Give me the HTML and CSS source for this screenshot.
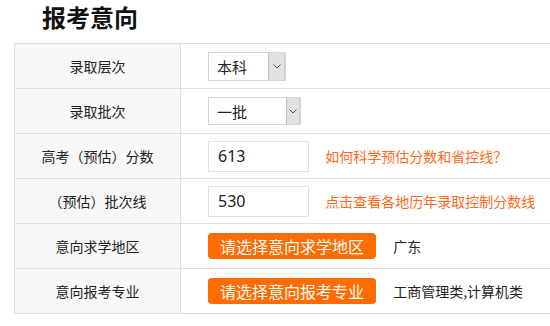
FILE: index.html
```html
<!DOCTYPE html>
<html lang="zh-CN">
<head>
    <meta charset="UTF-8">
    <title>报考意向</title>
    <link rel="stylesheet" href="styles.css">
</head>
<body>
    <h2 class="title">报考意向</h2>
    <table class="form">
        <tr>
            <td class="label">录取层次</td>
            <td class="field">
                <span class="select select-level">
                    <span class="select-value">本科</span>
                    <span class="select-arrow"><svg width="8" height="5" viewBox="0 0 8 5"><path d="M0.5 0.5 L4 4 L7.5 0.5" fill="none" stroke="#555" stroke-width="1"/></svg></span>
                </span>
            </td>
        </tr>
        <tr>
            <td class="label">录取批次</td>
            <td class="field">
                <span class="select select-batch">
                    <span class="select-value">一批</span>
                    <span class="select-arrow"><svg width="8" height="5" viewBox="0 0 8 5"><path d="M0.5 0.5 L4 4 L7.5 0.5" fill="none" stroke="#555" stroke-width="1"/></svg></span>
                </span>
            </td>
        </tr>
        <tr>
            <td class="label">高考（预估）分数</td>
            <td class="field">
                <input class="score" type="text" value="613">
                <a class="tip" href="#">如何科学预估分数和省控线？</a>
            </td>
        </tr>
        <tr>
            <td class="label">（预估）批次线</td>
            <td class="field">
                <input class="score" type="text" value="530">
                <a class="tip" href="#">点击查看各地历年录取控制分数线</a>
            </td>
        </tr>
        <tr>
            <td class="label">意向求学地区</td>
            <td class="field">
                <a class="btn" href="#">请选择意向求学地区</a>
                <span class="chosen">广东</span>
            </td>
        </tr>
        <tr>
            <td class="label">意向报考专业</td>
            <td class="field">
                <a class="btn" href="#">请选择意向报考专业</a>
                <span class="chosen">工商管理类,计算机类</span>
            </td>
        </tr>
    </table>
</body>
</html>
```

FILE: styles.css
```css
html, body {
    margin: 0;
    padding: 0;
    overflow: hidden;
    background: #fff;
    font-family: "Noto Sans CJK SC", "Noto Sans", sans-serif;
    color: #333;
}
.title {
    margin: 0;
    padding-left: 42px;
    font-size: 24px;
    line-height: 34px;
    font-weight: bold;
    color: #111;
}
.form {
    margin: 9px 0 0 14px;
    width: 580px;
    border-collapse: collapse;
}
.form td {
    height: 44px;
    border: 1px solid #dedede;
    padding: 0;
    font-size: 14px;
    vertical-align: middle;
}
.label {
    width: 165px;
    background-color: #f7f7f7;
    text-align: center;
    color: #222;
}
.field {
    padding-left: 27px !important;
    white-space: nowrap;
}
.select {
    display: inline-flex;
    box-sizing: border-box;
    height: 29px;
    border: 1px solid #d5d5d5;
    vertical-align: middle;
    background: #fff;
}
.select-level {
    width: 78px;
}
.select-batch {
    width: 93px;
    height: 28px;
}
.select-value {
    flex: 1;
    padding-left: 8px;
    font-size: 15px;
    line-height: 27px;
    color: #222;
}
.select-arrow {
    width: 15px;
    display: flex;
    align-items: center;
    justify-content: center;
    background: #e1e1e1;
    border-left: 1px solid #bdbdbd;
    border-right: 1px solid #cfcfcf;
}
.select-batch .select-arrow {
    width: 12px;
}
.score {
    box-sizing: border-box;
    width: 101px;
    height: 31px;
    border: 1px solid #dde2e8;
    padding: 0 0 0 9px;
    font-family: "Noto Sans", sans-serif;
    font-size: 16px;
    color: #222;
    vertical-align: middle;
    outline: none;
}
.tip {
    margin-left: 13px;
    color: #ff6a1a;
    text-decoration: none;
    vertical-align: middle;
}
.btn {
    display: inline-block;
    width: 168px;
    height: 26px;
    line-height: 26px;
    border-radius: 4px;
    background-color: #ff6c00;
    color: #fff;
    font-size: 16px;
    text-align: center;
    text-decoration: none;
    vertical-align: middle;
}
.chosen {
    margin-left: 14px;
    color: #222;
    vertical-align: middle;
}
```
